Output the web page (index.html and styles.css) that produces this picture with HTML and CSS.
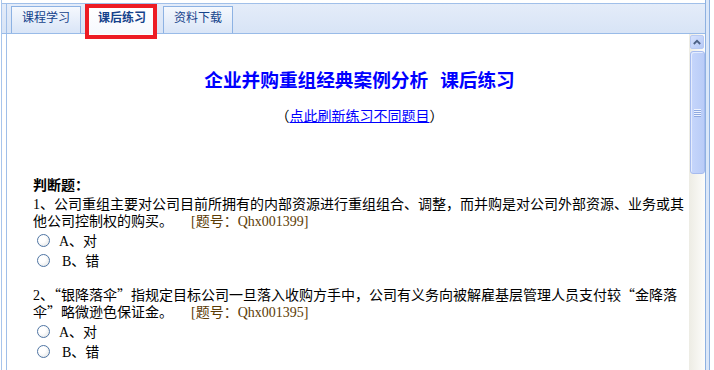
FILE: index.html
```html
<!DOCTYPE html>
<html lang="zh-CN">
<head>
<meta charset="utf-8">
<title>课后练习</title>
<link rel="stylesheet" href="styles.css">
</head>
<body>
<div class="frame">
  <div class="panel">
    <div class="tabrow">
      <div class="tabbar">
        <div class="tab">课程学习</div>
        <div class="tab active">课后练习</div>
        <div class="tab">资料下载</div>
      </div>
    </div>
    <div class="body">
      <div class="page">
        <div class="title">企业并购重组经典案例分析<span class="title-gap">课后练习</span></div>
        <div class="refresh">（<a href="#">点此刷新练习不同题目</a>）</div>
        <div class="questions">
          <div class="qtype">判断题：</div>
          <div class="question">
            <div class="stem">1、公司重组主要对公司目前所拥有的内部资源进行重组组合、调整，而并购是对公司外部资源、业务或其他公司控制权的购买。<span class="qid">[题号：Qhx001399]</span></div>
            <label class="opt"><span class="radio"></span>A、对</label>
            <label class="opt b"><span class="radio"></span>B、错</label>
          </div>
          <div class="question">
            <div class="stem">2、<span class="cjk">“</span>银降落伞<span class="cjk">”</span>指规定目标公司一旦落入收购方手中，公司有义务向被解雇基层管理人员支付较<span class="cjk">“</span>金降落伞<span class="cjk">”</span>略微逊色保证金。<span class="qid">[题号：Qhx001395]</span></div>
            <label class="opt"><span class="radio"></span>A、对</label>
            <label class="opt b"><span class="radio"></span>B、错</label>
          </div>
        </div>
      </div>
      <div class="scrollbar">
        <div class="sb-btn">
          <svg width="8" height="6" viewBox="0 0 8 6"><path d="M0.8 5 L4 1.8 L7.2 5" fill="none" stroke="#4d6185" stroke-width="1.8"/></svg>
        </div>
        <div class="sb-thumb"><span class="grip"></span></div>
      </div>
    </div>
  </div>
  <div class="rail"></div>
  <div class="mark"></div>
</div>
</body>
</html>
```
FILE: styles.css
```css
html, body {
  margin: 0;
  background: #fff;
}
body {
  font-family: "Liberation Serif", "Noto Sans CJK SC", serif;
  font-size: 14px;
  color: #000;
}
.frame {
  position: relative;
  display: flex;
  width: 709px;
  height: 370px;
  margin-left: 1px;
  box-sizing: border-box;
  border-left: 1px solid #a8c5ec;
  overflow: hidden;
}
.panel {
  width: 704px;
  display: flex;
  flex-direction: column;
  box-sizing: border-box;
  border-right: 1px solid #8eb1e1;
}
.rail {
  width: 4px;
  box-sizing: border-box;
  background: #dbe7f8;
  border-right: 1px solid #8eb1e1;
}
.tabrow {
  margin-top: 3px;
  height: 31px;
  box-sizing: border-box;
  border-top: 1px solid #a0bfe9;
  border-bottom: 1px solid #99bbe8;
  background: linear-gradient(#e4ecf9, #d8e4f6);
  padding-left: 4px;
  display: flex;
  flex-shrink: 0;
}
.tabbar {
  flex: 1;
  display: flex;
  align-items: flex-start;
  border-left: 1px solid #a0bfe9;
  padding-left: 4px;
}
.tab {
  margin-top: 2px;
  margin-right: 6px;
  width: 70px;
  height: 27px;
  box-sizing: border-box;
  border: 1px solid #8db2e3;
  border-bottom: none;
  background: linear-gradient(#f5f8fd, #d9e5f7);
  color: #15428b;
  font: 12px/19px "Noto Sans CJK SC", sans-serif;
  text-align: center;
}
.tab.active {
  position: relative;
  height: 28px;
  background: linear-gradient(#ffffff, #f6f9fe);
  font-weight: bold;
}
.body {
  flex: 1;
  display: flex;
  min-height: 0;
  margin-left: 4px;
  border-left: 1px solid #a0bfe9;
}
.page {
  flex: 1;
  padding-left: 26px;
  overflow: hidden;
}
.title,
.refresh {
  margin-left: -3px;
  text-align: center;
}
.title {
  margin-top: 33px;
  font: bold 18.67px/24px "Noto Sans CJK SC", sans-serif;
  color: #0000ff;
  white-space: nowrap;
}
.title-gap {
  margin-left: 12px;
}
.refresh {
  margin-top: 16px;
  line-height: 20px;
}
.refresh a {
  color: #0000ff;
  text-decoration: underline;
}
.questions {
  margin-top: 50px;
  width: 655px;
}
.qtype {
  font-weight: bold;
  line-height: 17px;
  margin-bottom: 2px;
}
.question + .question {
  margin-top: 17px;
}
.stem {
  line-height: 17px;
}
.cjk {
  font-family: "Noto Sans CJK SC", sans-serif;
  line-height: 14px;
}
.qid {
  margin-left: 18px;
  color: #5c3c06;
}
.opt {
  display: flex;
  align-items: center;
  height: 20px;
}
.radio {
  width: 13px;
  height: 13px;
  box-sizing: border-box;
  margin: 0 9px 0 4px;
  border: 1px solid #4f75a3;
  border-radius: 50%;
  background: radial-gradient(circle at 35% 35%, #ffffff 35%, #dcdfe0 100%);
}
.opt.b .radio {
  margin-right: 12px;
}
.scrollbar {
  width: 16px;
  flex-shrink: 0;
  background: linear-gradient(to right, #edece4, #fcfcfa);
  display: flex;
  flex-direction: column;
  align-items: center;
}
.sb-btn {
  width: 14px;
  height: 14px;
  margin-top: 1px;
  box-sizing: border-box;
  border: 1px solid #b8caf3;
  border-radius: 2px;
  background: linear-gradient(135deg, #d6e2fd, #b5c9f6);
  display: flex;
  align-items: center;
  justify-content: center;
}
.sb-thumb {
  width: 15px;
  height: 123px;
  margin-top: 2px;
  box-sizing: border-box;
  border: 1px solid #a6bbee;
  border-radius: 3px;
  background: linear-gradient(to right, #c6d6fb, #b9ccf7);
  box-shadow: inset 1px 1px 0 #e4ecfe;
  display: flex;
  align-items: center;
  justify-content: center;
}
.grip {
  width: 7px;
  height: 8px;
  background: repeating-linear-gradient(to bottom, #eef3fe 0 1px, #8fa9e0 1px 2px);
}
.mark {
  position: absolute;
  left: 83px;
  top: 4px;
  width: 72px;
  height: 35px;
  box-sizing: border-box;
  border: 4px solid #ed1c24;
}
```
